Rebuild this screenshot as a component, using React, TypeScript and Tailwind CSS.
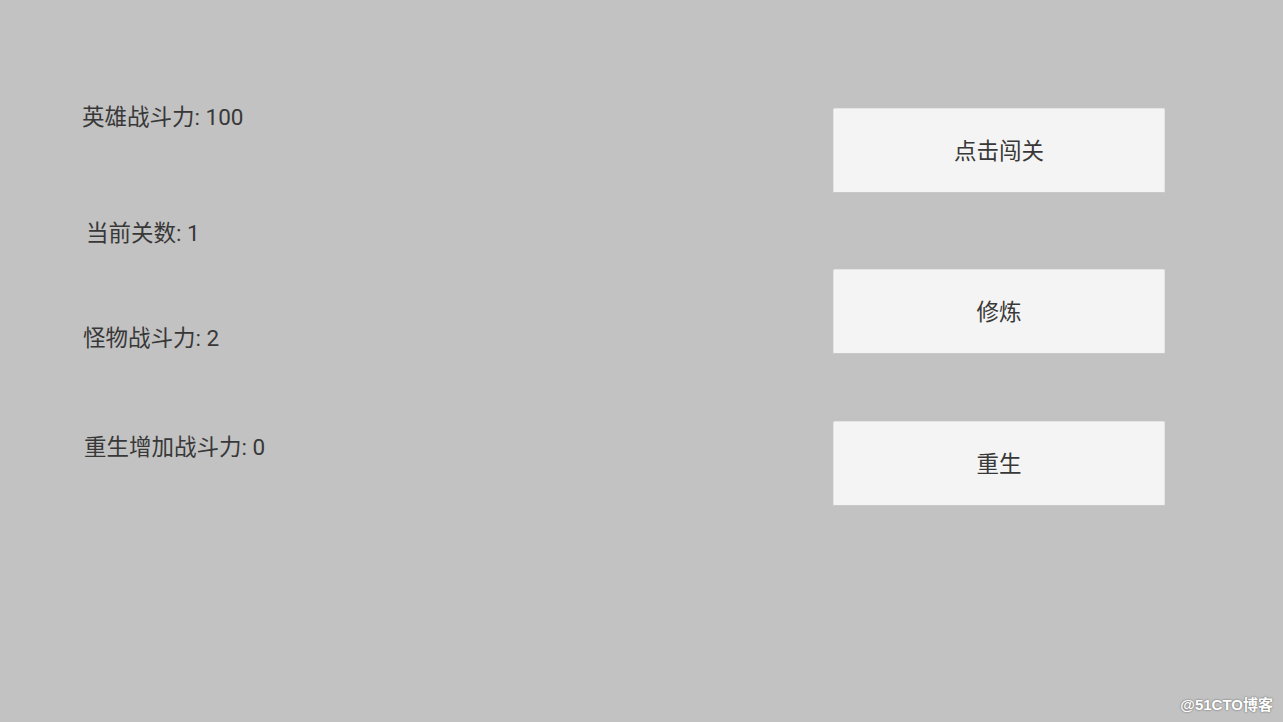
const font = "font-['Roboto','Noto_Sans_CJK_SC',sans-serif]";

const stats = [
  { label: "英雄战斗力", value: 100, className: "mt-[103px] ml-[82px]" },
  { label: "当前关数", value: 1, className: "mt-[88px] ml-[86px]" },
  { label: "怪物战斗力", value: 2, className: "mt-[77px] ml-[83px]" },
  { label: "重生增加战斗力", value: 0, className: "mt-[81px] ml-[84px]" },
];

const buttons = [
  { text: "点击闯关", className: "mt-[108px]" },
  { text: "修炼", className: "mt-[76px]" },
  { text: "重生", className: "mt-[67px]" },
];

export default function App() {
  return (
    <div
      className={`relative w-[1283px] h-[722px] overflow-hidden bg-[#c2c2c2] text-[#383838] ${font}`}
    >
      <div className="flex">
        <div className="flex flex-col w-[833px]">
          {stats.map((s) => (
            <div key={s.label} className={`text-[22.5px] leading-[28px] ${s.className}`}>
              {s.label}: {s.value}
            </div>
          ))}
        </div>

        <div className="flex flex-col w-[332px]">
          {buttons.map((b) => (
            <button
              key={b.text}
              className={`h-[85px] w-full pt-[3px] bg-[#f4f4f4] rounded-[2px] border border-[#e4e4e4] border-b-[#c8c8c8] text-[22.5px] text-[#383838] ${b.className}`}
            >
              {b.text}
            </button>
          ))}
        </div>
      </div>

      <div className="absolute right-[10px] bottom-[8px] text-[15px] leading-[18px] font-semibold text-white [text-shadow:0_0_2px_rgba(0,0,0,0.6)] font-['Liberation_Sans','Noto_Sans_CJK_SC',sans-serif]">
        @51CTO博客
      </div>
    </div>
  );
}
